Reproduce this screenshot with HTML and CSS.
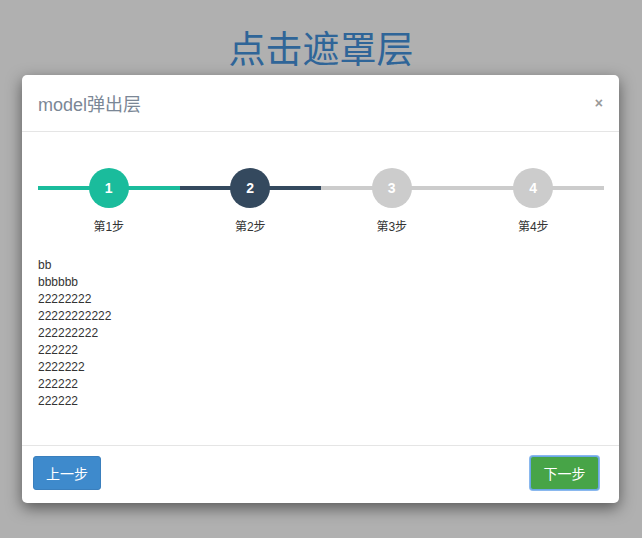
FILE: index.html
```html
<!DOCTYPE html>
<html lang="zh">
<head>
<meta charset="utf-8">
<link rel="stylesheet" href="styles.css">
</head>
<body>
<h1 class="page-title">点击遮罩层</h1>
<div class="modal">
  <div class="modal-header">
    <span class="modal-title">model弹出层</span>
    <span class="close">×</span>
  </div>
  <div class="modal-body">
    <div class="steps">
      <div class="step done">
        <div class="track"><span class="bar"></span><span class="dot">1</span></div>
        <div class="label">第1步</div>
      </div>
      <div class="step active">
        <div class="track"><span class="bar"></span><span class="dot">2</span></div>
        <div class="label">第2步</div>
      </div>
      <div class="step">
        <div class="track"><span class="bar"></span><span class="dot">3</span></div>
        <div class="label">第3步</div>
      </div>
      <div class="step">
        <div class="track"><span class="bar"></span><span class="dot">4</span></div>
        <div class="label">第4步</div>
      </div>
    </div>
    <div class="content">
      <div>bb</div>
      <div>bbbbbb</div>
      <div>22222222</div>
      <div>22222222222</div>
      <div>222222222</div>
      <div>222222</div>
      <div>2222222</div>
      <div>222222</div>
      <div>222222</div>
    </div>
  </div>
  <div class="modal-footer">
    <button class="btn btn-prev">上一步</button>
    <button class="btn btn-next">下一步</button>
  </div>
</div>
</body>
</html>
```

FILE: styles.css
```css
html, body {
  margin: 0;
  padding: 0;
}
body {
  background: #b0b0b0;
  font-family: "Liberation Sans", Arial, "Noto Sans CJK SC", sans-serif;
  color: #333;
  width: 642px;
  height: 538px;
  overflow: hidden;
}
.page-title {
  margin: 0;
  padding-top: 24px;
  height: 51px;
  box-sizing: border-box;
  text-align: center;
  font-size: 37px;
  font-weight: normal;
  line-height: 46px;
  color: #2f6598;
  font-family: "Noto Sans CJK SC", sans-serif;
}
.modal {
  margin: 24px 0 0 22px;
  width: 597px;
  height: 428px;
  background: #fff;
  border-radius: 5px;
  box-shadow: 0 5px 15px rgba(0,0,0,0.5);
  display: flex;
  flex-direction: column;
}
.modal-header {
  height: 56px;
  flex: none;
  border-bottom: 1px solid #e5e5e5;
  display: flex;
  align-items: center;
  justify-content: space-between;
  padding: 0 16px 0 16px;
}
.modal-title {
  font-size: 18px;
  color: #7b8796;
  font-family: "Liberation Sans", Arial, "Noto Sans CJK SC", sans-serif;
  margin-top: -1px;
}
.close {
  font-size: 14px;
  font-weight: bold;
  color: #999;
  margin-top: 0;
}
.modal-body {
  flex: 1;
  padding: 36px 15px 0 16px;
}
.steps {
  display: flex;
}
.step {
  flex: 1;
  display: flex;
  flex-direction: column;
  align-items: center;
}
.track {
  position: relative;
  width: 100%;
  height: 40px;
  display: flex;
  justify-content: center;
  align-items: center;
}
.bar {
  position: absolute;
  left: 0;
  right: 0;
  top: 18px;
  height: 4px;
  background: #cccccc;
}
.dot {
  position: relative;
  width: 40px;
  height: 40px;
  border-radius: 50%;
  background: #cccccc;
  color: #fff;
  font-weight: bold;
  font-size: 14px;
  display: flex;
  align-items: center;
  justify-content: center;
}
.step.done .bar, .step.done .dot { background: #1abc9c; }
.step.active .bar, .step.active .dot { background: #34495e; }
.label {
  margin-top: 12px;
  font-size: 12px;
  line-height: 14px;
  color: #333;
}
.content {
  margin-top: 23px;
  font-size: 12px;
  line-height: 17px;
  color: #333;
}
.modal-footer {
  flex: none;
  box-sizing: border-box;
  height: 58px;
  border-top: 1px solid #e5e5e5;
  display: flex;
  justify-content: space-between;
  align-items: flex-start;
  padding: 10px 20px 0 11px;
}
.btn {
  height: 34px;
  padding: 0 12px;
  font-size: 14px;
  color: #fff;
  border-radius: 3px;
  font-family: "Liberation Sans", Arial, "Noto Sans CJK SC", sans-serif;
}
.btn-prev {
  width: 68px;
  background: #3e8acc;
  border: 1px solid #3a7fbd;
}
.btn-next {
  width: 69px;
  background: #47a447;
  border: 1px solid #6aa7e8;
  box-shadow: 0 0 0 1px #8ab8ee;
}
```
